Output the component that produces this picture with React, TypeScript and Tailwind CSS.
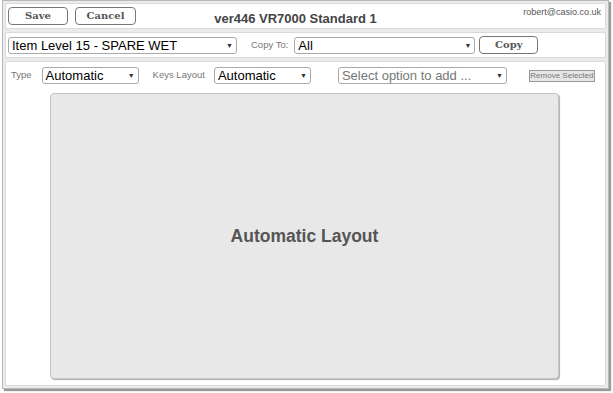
const font = { fontFamily: '"Liberation Sans", Arial, sans-serif' };

const Caret = () => (
  <span className="text-[7px] leading-none text-[#333] pr-[3px]">▼</span>
);

const FakeSelect = ({ value, className, muted }: { value: string; className: string; muted?: boolean }) => (
  <div
    className={`flex items-center justify-between h-[17px] border border-[#a9a9a9] rounded-[3px] bg-white pl-[3px] ${className}`}
  >
    <span className={`text-[13px] leading-none ${muted ? "text-[#777]" : "text-black"}`}>{value}</span>
    <Caret />
  </div>
);

const Btn = ({ label, className }: { label: string; className: string }) => (
  <button
    className={`h-[18px] border border-[#777] rounded-[4px] bg-white text-[10px] font-bold text-[#555] leading-none ${className}`}
    style={{ fontFamily: '"DejaVu Serif", "Liberation Serif", serif' }}
  >
    {label}
  </button>
);

export default function App() {
  return (
    <div className="w-[613px] h-[393px] bg-white" style={font}>
      <div className="ml-[2px] w-[607px] h-[389px] bg-[#ebebeb] border border-[#b8b8b8] shadow-[2px_2px_1px_#9a9a9a] flex flex-col gap-[3px] px-[2px] pt-[2px] pb-[2px]">
        {/* header */}
        <div className="relative h-[26px] bg-white border border-[#dadada] rounded-[2px] flex items-center pl-[2px] gap-[7px]">
          <Btn label="Save" className="w-[60px]" />
          <Btn label="Cancel" className="w-[61px]" />
          <div className="absolute left-0 right-0 top-[6px] pr-[20px] text-center leading-none pointer-events-none">
            <span className="text-[13px] leading-none font-bold text-[#444]">ver446 VR7000 Standard 1</span>
          </div>
          <span className="absolute right-[4px] top-[2px] text-[9px] text-[#555]">robert@casio.co.uk</span>
        </div>

        {/* copy row */}
        <div className="h-[26px] bg-white border border-[#dadada] rounded-[2px] flex items-center pl-[2px]">
          <FakeSelect value="Item Level 15 - SPARE WET" className="w-[229px]" />
          <span className="ml-[14px] text-[9.5px] text-[#777]">Copy To:</span>
          <FakeSelect value="All" className="w-[181px] ml-[6px]" />
          <Btn label="Copy" className="w-[59px] ml-[4px]" />
        </div>

        {/* layout panel */}
        <div className="flex-1 bg-white border border-[#dadada] rounded-[2px] flex flex-col">
          <div className="h-[26px] flex items-center pl-[5px] pt-[1px]">
            <span className="text-[9.5px] text-[#777]">Type</span>
            <FakeSelect value="Automatic" className="w-[97px] ml-[10px]" />
            <span className="ml-[14px] text-[9.5px] text-[#777]">Keys Layout</span>
            <FakeSelect value="Automatic" className="w-[97px] ml-[9px]" />
            <FakeSelect value="Select option to add ..." muted className="w-[169px] ml-[27px]" />
            <button className="ml-[22px] h-[12px] w-[66px] border border-[#999] bg-[#e6e6e6] text-[8px] leading-none text-[#777]">
              Remove Selected
            </button>
          </div>
          <div className="flex pl-[44px] pt-[5px]">
            <div className="w-[509px] h-[286px] bg-[#e8e8e8] border border-[#c4c4c4] rounded-[4px] shadow-[1px_1px_1px_#b0b0b0] flex items-center justify-center">
              <span className="text-[17.5px] font-bold text-[#555]">Automatic Layout</span>
            </div>
          </div>
        </div>
      </div>
    </div>
  );
}
